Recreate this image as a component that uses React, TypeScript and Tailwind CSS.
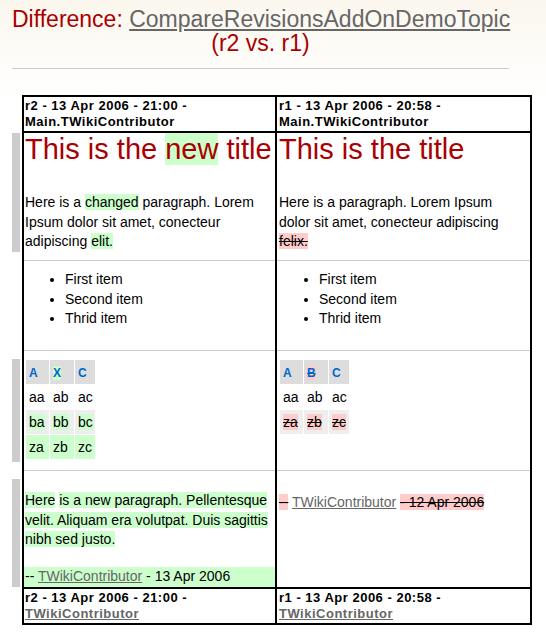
import React from "react";

const G = "bg-[#cfc]";

function Bar({ className }: { className: string }) {
  return <div className={`w-[8px] bg-[#ccc] ${className}`} />;
}

function DiffRow({
  height,
  bar,
  left,
  right,
  sep = true,
}: {
  height: string;
  bar?: React.ReactNode;
  left: React.ReactNode;
  right: React.ReactNode;
  sep?: boolean;
}) {
  return (
    <div className={`flex ${height}`}>
      <div className="w-[10px] shrink-0">{bar}</div>
      <div className="flex w-[510px] border-x-2 border-black">
        <div className={sep ? "w-[251px] border-b border-[#ccc]" : "w-[251px]"}>{left}</div>
        <div className="flex-1 border-l-2 border-black">
          <div className={sep ? "h-full border-b border-[#ccc]" : "h-full"}>{right}</div>
        </div>
      </div>
    </div>
  );
}

function EdgeRow({ left, right }: { left: React.ReactNode; right: React.ReactNode }) {
  return (
    <div className="flex">
      <div className="w-[10px] shrink-0" />
      <div className="flex w-[510px] border-2 border-black text-[13px] font-bold leading-[16px] tracking-[0.5px] whitespace-nowrap">
        <div className="w-[251px] px-[1px] py-[1px]">{left}</div>
        <div className="flex-1 border-l-2 border-black px-[2px] py-[1px]">{right}</div>
      </div>
    </div>
  );
}

function Head({ children }: { children: React.ReactNode }) {
  return (
    <div className="h-[24px] bg-[#ddd] pl-[3px] pt-[3px] text-[12px] font-bold leading-[21px] text-[#06c]">
      {children}
    </div>
  );
}

function Cell({ children, bg = "" }: { children: React.ReactNode; bg?: string }) {
  return <div className={`h-[24px] pl-[3px] leading-[24px] ${bg}`}>{children}</div>;
}

function MiniTable({ children }: { children: React.ReactNode }) {
  return (
    <div className="inline-grid grid-cols-[23px_24px_20px] gap-[1px] p-[1px] text-[14px]">{children}</div>
  );
}

export default function App() {
  return (
    <div className="min-h-[637px] w-[546px] bg-[linear-gradient(to_bottom,#fbf7ee_0px,#ffffff_100px)] font-['Liberation_Sans',Arial,sans-serif] text-black">
      <div className="pl-[12px] pt-[7px]">
        <h1 className="w-[497px] whitespace-nowrap text-center text-[23px] font-normal leading-[24px] text-[#a00]">
          Difference:{" "}
          <a href="#" className="text-[#666] underline">
            CompareRevisionsAddOnDemoTopic
          </a>
          <br />
          (r2 vs. r1)
        </h1>
        <div className="mt-[13px] h-px w-[497px] bg-[#ccc]" />

        <div className="mt-[26px]">
          <EdgeRow
            left={
              <>
                r2 - 13 Apr 2006 - 21:00 -<br />
                Main.TWikiContributor
              </>
            }
            right={
              <>
                r1 - 13 Apr 2006 - 20:58 -<br />
                Main.TWikiContributor
              </>
            }
          />

          <DiffRow
            height="h-[128px]"
            bar={<Bar className="h-[119px]" />}
            left={
              <div className="pl-[1px]">
                <div className="whitespace-nowrap text-[29px] leading-[33px] text-[#a00]">
                  This is the <span className={G}>new</span> title
                </div>
                <p className="mt-[27px] whitespace-nowrap text-[14px] leading-[19.6px]">
                  Here is a <span className={G}>changed</span> paragraph. Lorem
                  <br />
                  Ipsum dolor sit amet, conecteur
                  <br />
                  adipiscing <span className={G}>elit.</span>
                </p>
              </div>
            }
            right={
              <div className="pl-[2px]">
                <div className="whitespace-nowrap text-[29px] leading-[33px] text-[#a00]">This is the title</div>
                <p className="mt-[27px] whitespace-nowrap text-[14px] leading-[19.6px]">
                  Here is a paragraph. Lorem Ipsum
                  <br />
                  dolor sit amet, conecteur adipiscing
                  <br />
                  <span className="bg-[#fcc] line-through">felix.</span>
                </p>
              </div>
            }
          />

          <DiffRow
            height="h-[90px]"
            left={
              <ul className="list-disc pl-[41px] pt-[9px] text-[14px] leading-[19.5px]">
                <li>First item</li>
                <li>Second item</li>
                <li>Thrid item</li>
              </ul>
            }
            right={
              <ul className="list-disc pl-[42px] pt-[9px] text-[14px] leading-[19.5px]">
                <li>First item</li>
                <li>Second item</li>
                <li>Thrid item</li>
              </ul>
            }
          />

          <DiffRow
            height="h-[120px]"
            bar={<Bar className="mt-[8px] h-[103px]" />}
            left={
              <div className="pl-[1px] pt-[8px]">
                <MiniTable>
                  <Head>A</Head>
                  <Head>
                    <span className={G}>X</span>
                  </Head>
                  <Head>C</Head>
                  <Cell>aa</Cell>
                  <Cell>ab</Cell>
                  <Cell>ac</Cell>
                  <Cell bg="bg-[#eee]">
                    <span className={G}>ba</span>
                  </Cell>
                  <Cell bg="bg-[#eee]">
                    <span className={G}>bb</span>
                  </Cell>
                  <Cell bg="bg-[#eee]">
                    <span className={G}>bc</span>
                  </Cell>
                  <Cell bg={G}>za</Cell>
                  <Cell bg={G}>zb</Cell>
                  <Cell bg={G}>zc</Cell>
                </MiniTable>
              </div>
            }
            right={
              <div className="pl-[2px] pt-[8px]">
                <MiniTable>
                  <Head>A</Head>
                  <Head>
                    <span className="bg-[#fcc] line-through">B</span>
                  </Head>
                  <Head>C</Head>
                  <Cell>aa</Cell>
                  <Cell>ab</Cell>
                  <Cell>ac</Cell>
                  <Cell bg="bg-[#eee]">
                    <span className="bg-[#fcc] line-through">za</span>
                  </Cell>
                  <Cell bg="bg-[#eee]">
                    <span className="bg-[#fcc] line-through">zb</span>
                  </Cell>
                  <Cell bg="bg-[#eee]">
                    <span className="bg-[#fcc] line-through">zc</span>
                  </Cell>
                </MiniTable>
              </div>
            }
          />

          <DiffRow
            height="h-[116px]"
            sep={false}
            bar={<Bar className="mt-[8px] h-[108px]" />}
            left={
              <div className="flex h-full flex-col text-[14px] leading-[19.6px]">
                <p className="whitespace-nowrap pl-[1px] pt-[20px]">
                  <span className={G}>Here</span> <span className={G}>is a new paragraph. Pellentesque</span>
                  <br />
                  <span className={G}>velit. Aliquam era volutpat. Duis sagittis</span>
                  <br />
                  <span className={G}>nibh sed justo.</span>
                </p>
                <div className="mt-auto whitespace-nowrap bg-[#cfc] pl-[1px]">
                  --{" "}
                  <a href="#" className="text-[#666] underline">
                    TWikiContributor
                  </a>{" "}
                  - 13 Apr 2006
                </div>
              </div>
            }
            right={
              <div className="whitespace-nowrap pl-[2px] pt-[22px] text-[14px] leading-[19.6px]">
                <span className="bg-[#fcc] line-through">--</span>{" "}
                <a href="#" className="text-[#666] underline">
                  TWikiContributor
                </a>{" "}
                <span className="bg-[#fcc] line-through">- 12 Apr 2006</span>
              </div>
            }
          />

          <EdgeRow
            left={
              <>
                r2 - 13 Apr 2006 - 21:00 -<br />
                <a href="#" className="text-[#666] underline">
                  TWikiContributor
                </a>
              </>
            }
            right={
              <>
                r1 - 13 Apr 2006 - 20:58 -<br />
                <a href="#" className="text-[#666] underline">
                  TWikiContributor
                </a>
              </>
            }
          />
        </div>
      </div>
    </div>
  );
}
